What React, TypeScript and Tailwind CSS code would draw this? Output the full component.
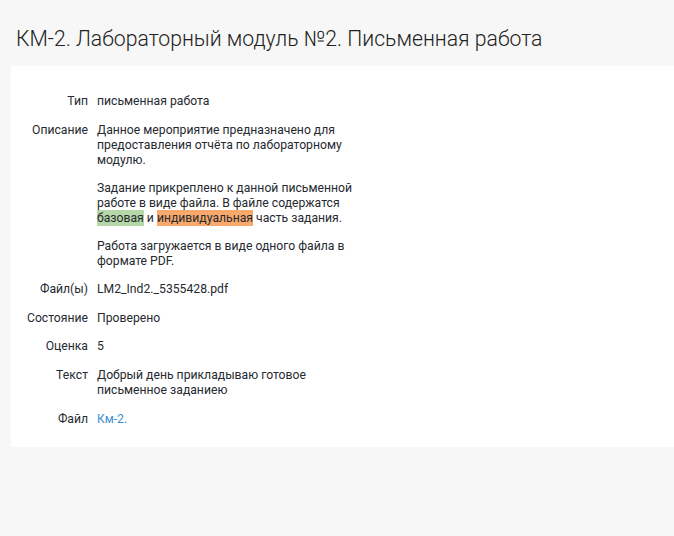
export default function App() {
  const rows: { label: string; value: React.ReactNode }[] = [
    { label: 'Тип', value: <p>письменная работа</p> },
    {
      label: 'Описание',
      value: (
        <div className="flex flex-col gap-[13px]">
          <p>Данное мероприятие предназначено для предоставления отчёта по лабораторному модулю.</p>
          <p>
            Задание прикреплено к данной письменной работе в виде файла. В файле содержатся{' '}
            <span className="bg-[#b6d7a8] py-[1px]">базовая</span> и{' '}
            <span className="bg-[#f9a96c] py-[1px]">индивидуальная</span> часть задания.
          </p>
          <p>Работа загружается в виде одного файла в формате PDF.</p>
        </div>
      ),
    },
    { label: 'Файл(ы)', value: <p>LM2_Ind2._5355428.pdf</p> },
    { label: 'Состояние', value: <p>Проверено</p> },
    { label: 'Оценка', value: <p>5</p> },
    { label: 'Текст', value: <p>Добрый день прикладываю готовое письменное заданиею</p> },
    { label: 'Файл', value: <a className="text-[#3d8fd1]">Км-2.</a> },
  ];

  return (
    <div className="min-h-[536px] bg-[#f7f7f7] font-['Roboto',sans-serif] text-[#262a30]">
      <h1 className="pl-[16px] pt-[28px] pb-[16px] text-[21.2px] leading-[22px] font-light text-[#222]">
        КМ-2. Лабораторный модуль №2. Письменная работа
      </h1>
      <div className="ml-[11px] h-[381px] bg-white pt-[28px]">
        <div className="grid grid-cols-[77px_268px] gap-x-[9px] gap-y-[13.6px] text-[12.2px] leading-[15px]">
          {rows.map((r) => (
            <div key={r.label} className="contents">
              <div className="text-right">{r.label}</div>
              <div>{r.value}</div>
            </div>
          ))}
        </div>
      </div>
    </div>
  );
}
